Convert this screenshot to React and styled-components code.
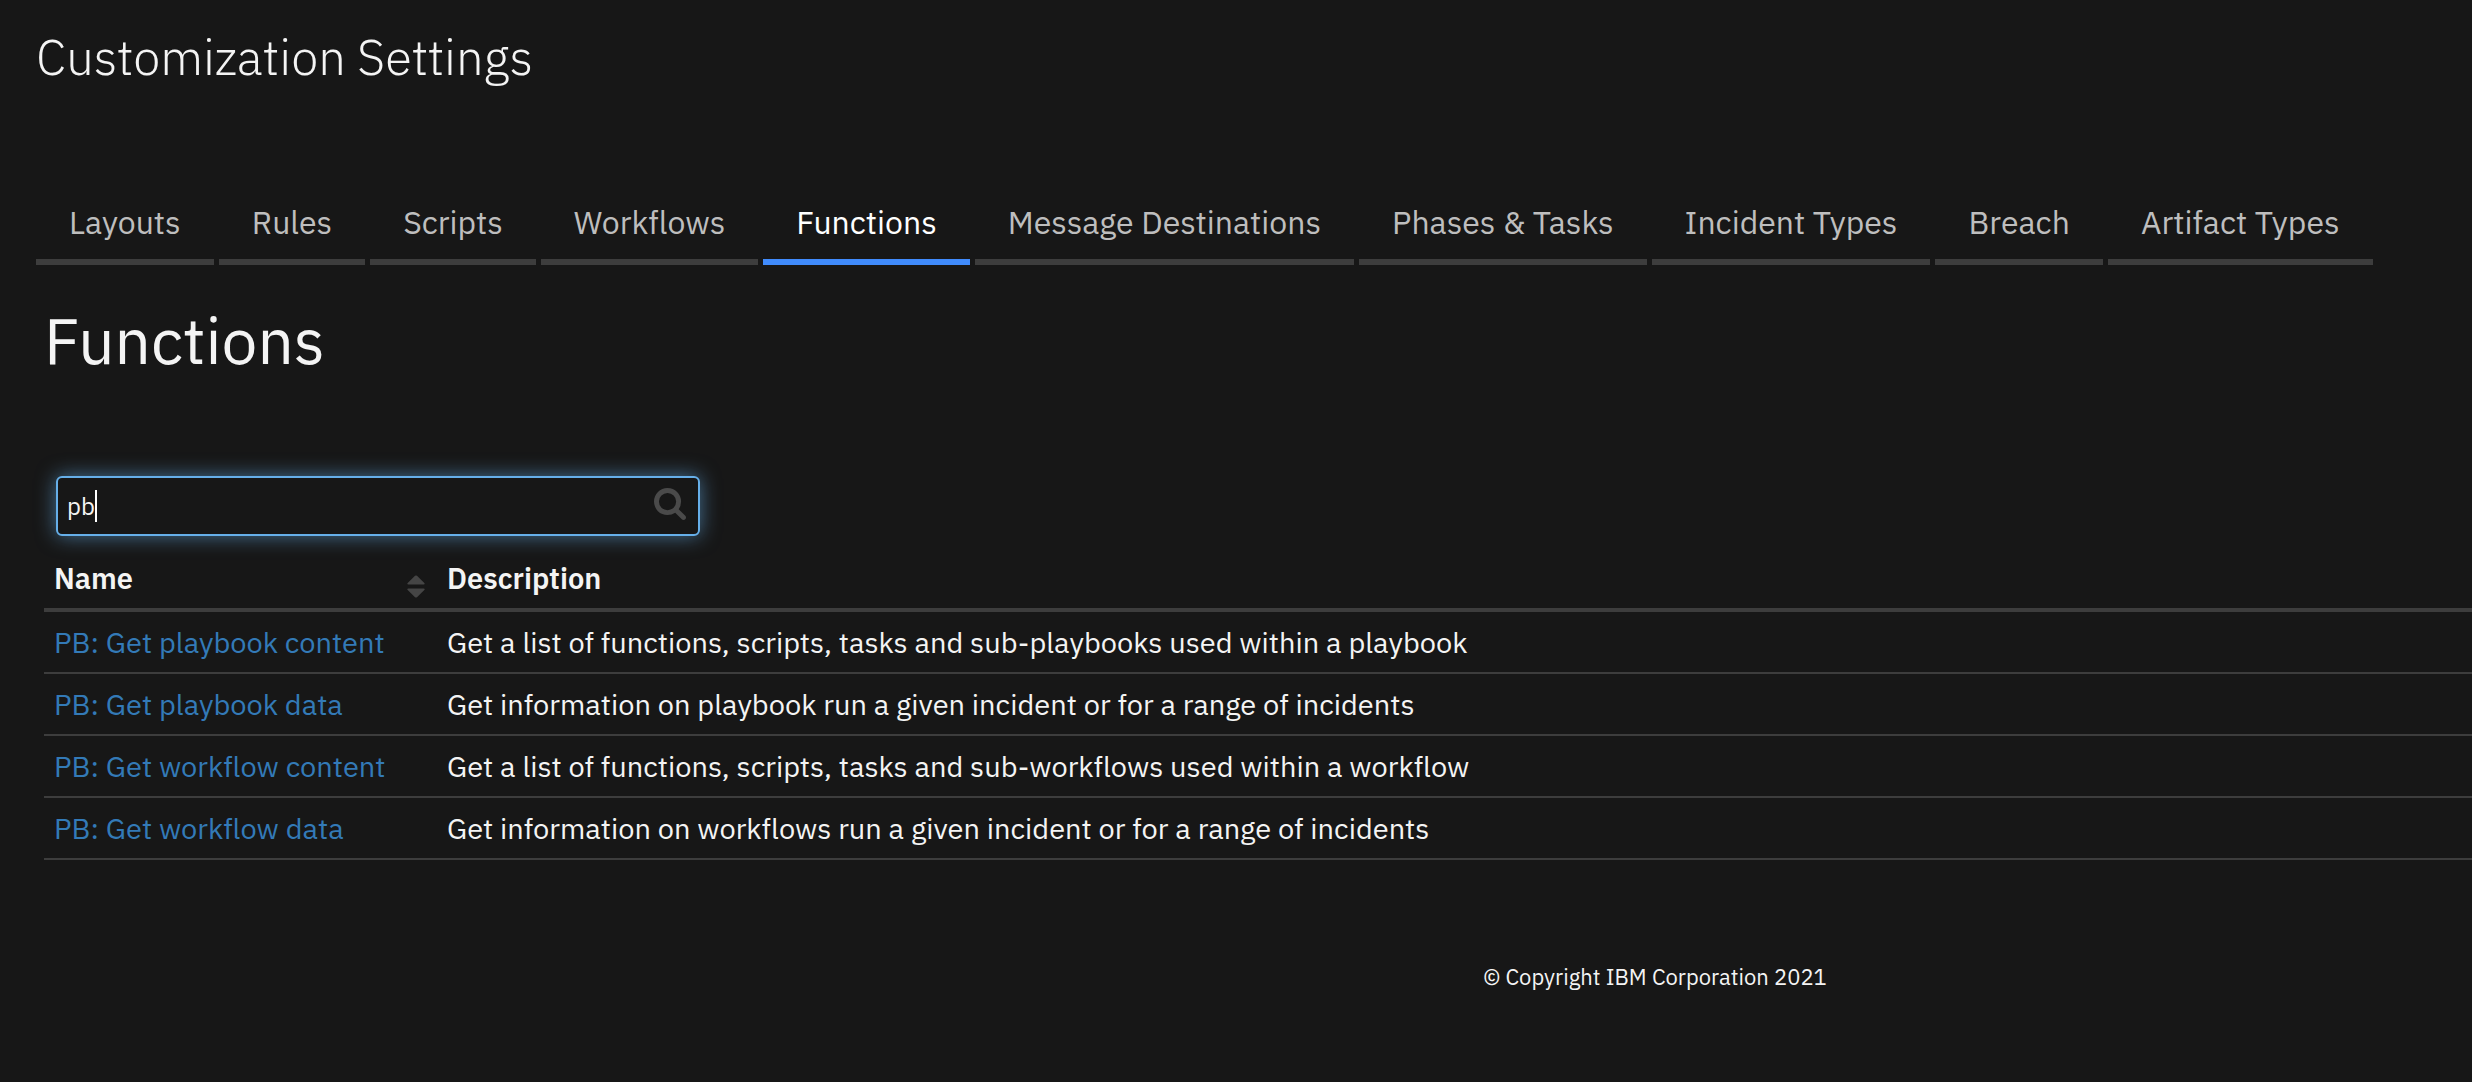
import React, { useState } from "react";
import styled, { createGlobalStyle } from "styled-components";

const GlobalStyle = createGlobalStyle`
  * { box-sizing: border-box; }
  body {
    margin: 0;
    background: #171717;
    color: #f4f4f4;
    font-family: "IBM Plex Sans", "Open Sans", sans-serif;
    font-size: 29px;
    line-height: 40px;
    overflow-x: hidden;
  }
`;

const Page = styled.div`
  min-height: 100vh;
  background: #171717;
`;

const Header = styled.header`
  padding: 25px 36px 0;
`;

const PageTitle = styled.h1`
  margin: 0 0 111px;
  font-size: 49px;
  font-weight: 300;
  line-height: 64px;
`;

const Tabs = styled.nav`
  display: flex;
  gap: 5px;
`;

const Tab = styled.a`
  padding: 0 33px 15px;
  border-bottom: 6px solid ${({ $active }) => ($active ? "#408bfc" : "#3d3d3d")};
  color: ${({ $active }) => ($active ? "#ffffff" : "#bebebe")};
  font-size: 32px;
  line-height: 44px;
  text-decoration: none;
  white-space: nowrap;
`;

const Content = styled.main`
  padding: 35px 0 0 44px;
`;

const SectionTitle = styled.h2`
  margin: 0 0 96px;
  font-size: 64px;
  font-weight: 400;
  line-height: 80px;
`;

const SearchBox = styled.form`
  position: relative;
  width: 644px;
  margin-left: 12px;
`;

const SearchInput = styled.input`
  display: block;
  width: 100%;
  height: 60px;
  padding: 0 56px 0 9px;
  border: 2px solid #66afe9;
  border-radius: 6px;
  outline: none;
  background: #171717;
  box-shadow: 0 0 20px rgba(102, 175, 233, 0.6);
  color: #f4f4f4;
  caret-color: transparent;
  font: 400 24px/32px "IBM Plex Sans", "Open Sans", sans-serif;
`;

const Caret = styled.span`
  position: absolute;
  top: 14px;
  left: 39px;
  width: 2px;
  height: 32px;
  background: #ffffff;
`;

const SearchButton = styled.button`
  position: absolute;
  top: 12px;
  right: 14px;
  padding: 0;
  border: 0;
  background: none;
  color: #4a4a4a;

  svg { display: block; }
`;

const Table = styled.table`
  width: 100%;
  margin-top: 12px;
  border-collapse: separate;
  border-spacing: 0;
  table-layout: fixed;
`;

const HeadCell = styled.th`
  width: ${({ $width }) => $width || "auto"};
  padding: 10px;
  border-bottom: 4px solid #3d3d3d;
  font-weight: 600;
  text-align: left;
`;

const SortButton = styled.button`
  display: flex;
  align-items: flex-end;
  justify-content: space-between;
  width: 100%;
  padding: 0 2px 0 0;
  border: 0;
  background: none;
  color: inherit;
  font: inherit;

  svg { color: #454545; }
`;

const Cell = styled.td`
  padding: 10px;
  border-bottom: 2px solid #3d3d3d;
  white-space: nowrap;
`;

const FunctionLink = styled.a`
  color: #337ab7;
  text-decoration: none;
`;

const Footer = styled.footer`
  margin-top: 101px;
  padding-left: 60%;
  font-size: 22px;
  line-height: 32px;
`;

const SearchIcon = () => (
  <svg width="32" height="32" viewBox="0 0 1664 1664" fill="currentColor" aria-hidden="true">
    <path d="M1152 704q0-185-131.500-316.500t-316.500-131.500-316.500 131.500-131.500 316.500 131.500 316.500 316.500 131.500 316.500-131.500 131.500-316.500zm512 832q0 52-38 90t-90 38q-54 0-90-38l-343-342q-179 124-399 124-143 0-273.500-55.500t-225-150-150-225-55.500-273.500 55.500-273.500 150-225 225-150 273.500-55.500 273.500 55.500 225 150 150 225 55.500 273.500q0 220-124 399l343 343q37 37 37 90z" />
  </svg>
);

const SortIcon = () => (
  <svg width="18" height="23" viewBox="0 0 18 23" fill="currentColor" aria-hidden="true">
    <path d="M1.300 9.500Q-.3 9.300.700 7.900L8 .800Q9 0 10 .800L17.300 7.900Q18.300 9.300 16.700 9.500Z" />
    <path d="M1.300 13.500Q-.3 13.700.700 15.100L8 22.200Q9 23 10 22.200L17.300 15.100Q18.300 13.700 16.700 13.500Z" />
  </svg>
);

const tabs = [
  "Layouts",
  "Rules",
  "Scripts",
  "Workflows",
  "Functions",
  "Message Destinations",
  "Phases & Tasks",
  "Incident Types",
  "Breach",
  "Artifact Types",
];

const functions = [
  ["PB: Get playbook content", "Get a list of functions, scripts, tasks and sub-playbooks used within a playbook"],
  ["PB: Get playbook data", "Get information on playbook run a given incident or for a range of incidents"],
  ["PB: Get workflow content", "Get a list of functions, scripts, tasks and sub-workflows used within a workflow"],
  ["PB: Get workflow data", "Get information on workflows run a given incident or for a range of incidents"],
];

export default function App() {
  const [query, setQuery] = useState("pb");

  return (
    <Page>
      <GlobalStyle />
      <Header>
        <PageTitle>Customization Settings</PageTitle>
        <Tabs aria-label="Customization Settings">
          {tabs.map((name) => {
            const active = name === "Functions";
            return (
              <Tab key={name} href="#" $active={active} aria-current={active ? "page" : undefined}>
                {name}
              </Tab>
            );
          })}
        </Tabs>
      </Header>
      <Content>
        <SectionTitle>Functions</SectionTitle>
        <SearchBox role="search" onSubmit={(e) => e.preventDefault()}>
          <SearchInput
            type="text"
            aria-label="Search functions"
            value={query}
            onChange={(e) => setQuery(e.target.value)}
          />
          <Caret />
          <SearchButton type="submit" aria-label="Search">
            <SearchIcon />
          </SearchButton>
        </SearchBox>
        <Table>
          <thead>
            <tr>
              <HeadCell scope="col" $width="393px">
                <SortButton type="button">
                  Name
                  <SortIcon />
                </SortButton>
              </HeadCell>
              <HeadCell scope="col">Description</HeadCell>
            </tr>
          </thead>
          <tbody>
            {functions.map(([name, description]) => (
              <tr key={name}>
                <Cell>
                  <FunctionLink href="#">{name}</FunctionLink>
                </Cell>
                <Cell>{description}</Cell>
              </tr>
            ))}
          </tbody>
        </Table>
      </Content>
      <Footer>© Copyright IBM Corporation 2021</Footer>
    </Page>
  );
}
